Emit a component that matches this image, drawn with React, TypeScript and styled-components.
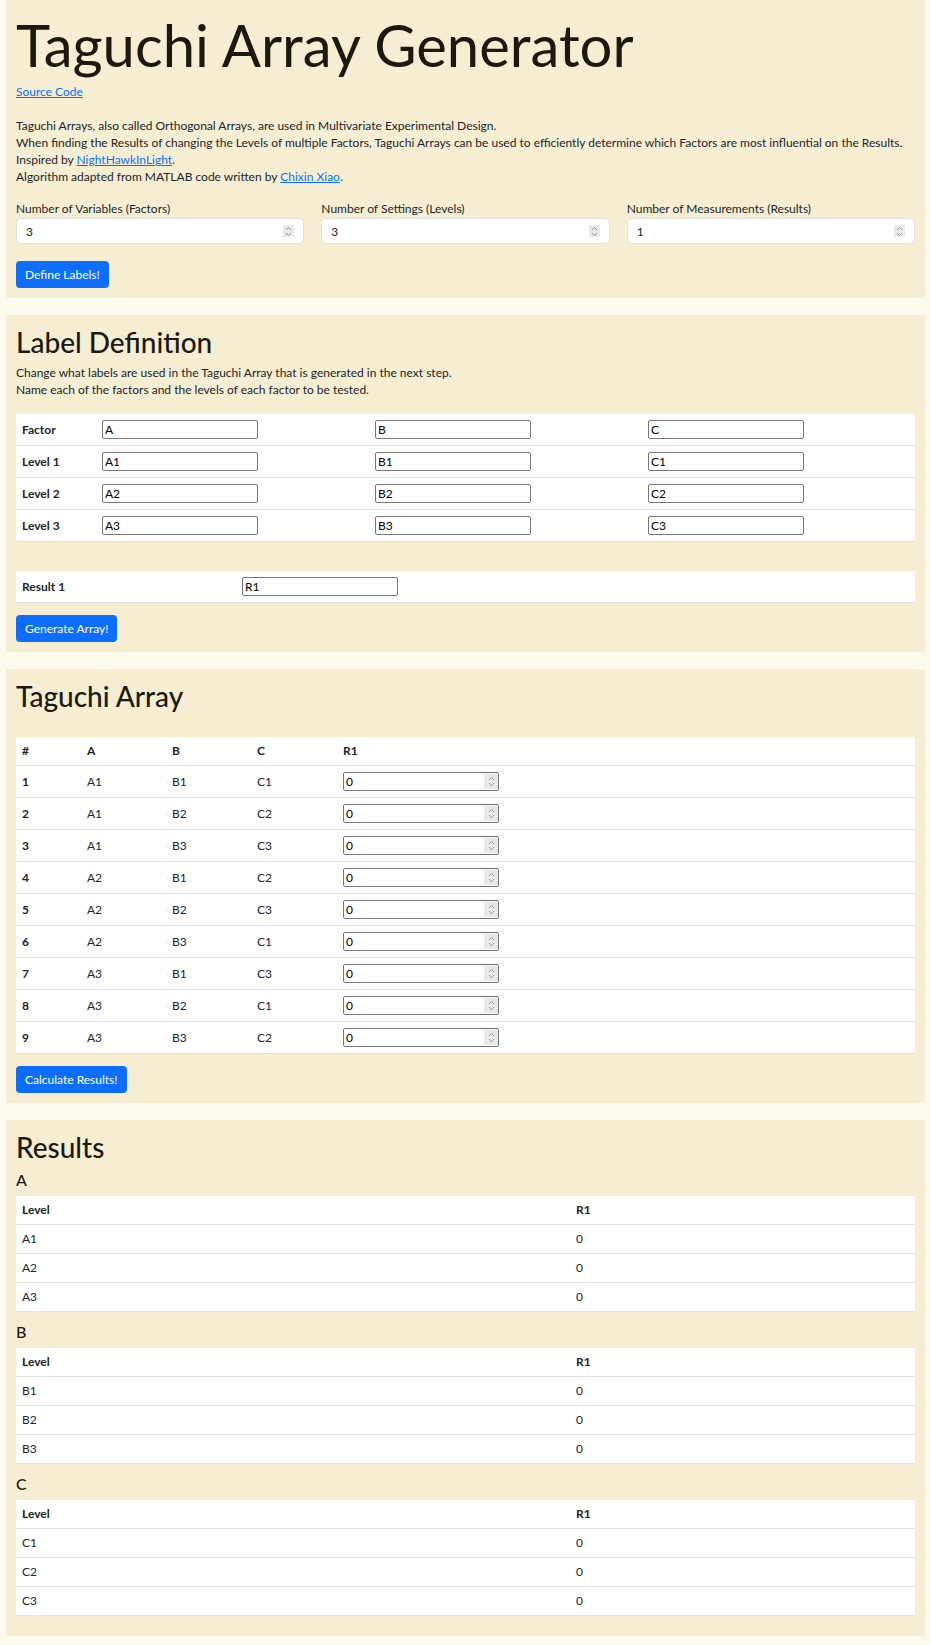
import React from 'react';
import styled, { createGlobalStyle } from 'styled-components';

const GlobalStyle = createGlobalStyle`
  html, body {
    margin: 0;
    padding: 0;
  }
  body {
    background: #fcf9ee;
    color: #212529;
    font-family: Lato, 'Open Sans', sans-serif;
    font-size: 12px;
    line-height: 17px;
  }
`;

const Page = styled.div`
  display: flex;
  flex-direction: column;
  gap: 17px;
  padding: 0 6px 6px;
`;

const Panel = styled.section`
  background: #f5eed3;
  padding: 10px;
`;

const Title = styled.h1`
  margin: 0 0 3px;
  font-size: 58px;
  line-height: 70px;
  font-weight: 400;
  color: #1c1a10;
`;

const Link = styled.a`
  color: #0d6efd;
  text-decoration: underline;
`;

const Intro = styled.div`
  margin: 17px 0 15px;
`;

const Line = styled.div``;

const FieldGrid = styled.div`
  display: grid;
  grid-template-columns: repeat(3, 1fr);
  gap: 17px;
  margin-bottom: 17px;
`;

const Field = styled.label`
  display: flex;
  flex-direction: column;
  gap: 1px;
`;

// wrapper so the spinner drawing can sit over the right edge of a number input
const SpinWrap = styled.span<{ $inline?: boolean }>`
  position: relative;
  display: block;
  width: ${p => (p.$inline ? '156px' : '100%')};
`;

const Spinner = styled.span<{ $compact?: boolean }>`
  position: absolute;
  display: flex;
  align-items: center;
  justify-content: center;
  background: #e9e9ed;
  pointer-events: none;
  ${p =>
    p.$compact
      ? `right: 10px; top: 7px; width: 11px; height: 12px;`
      : `right: 1px; top: 2px; width: 14px; height: 15px;`}
`;

const NumberBox = styled.input`
  box-sizing: border-box;
  height: 26px;
  width: 100%;
  padding: 3px 9px;
  border: 1px solid #dee2e6;
  border-radius: 5px;
  background: #fff;
  font: inherit;
  color: #212529;
  -moz-appearance: textfield;
  &::-webkit-inner-spin-button,
  &::-webkit-outer-spin-button {
    -webkit-appearance: none;
    margin: 0;
  }
`;

const PrimaryButton = styled.button`
  display: inline-block;
  border: none;
  border-radius: 4px;
  padding: 5px 9px;
  background: #0d6efd;
  color: #fff;
  font: inherit;
  line-height: 17px;
  cursor: pointer;
`;

const PanelHeading = styled.h3<{ $gap?: number }>`
  margin: 0 0 ${p => p.$gap ?? 5}px;
  font-size: 28px;
  line-height: 34px;
  font-weight: 500;
  color: #1c1a10;
`;

const SubHeading = styled.h5`
  margin: 0 0 7px;
  font-size: 16px;
  line-height: 19px;
  font-weight: 500;
  color: #1c1a10;
`;

const DataTable = styled.table<{ $gap?: number; $top?: number }>`
  width: 100%;
  border-collapse: collapse;
  table-layout: fixed;
  background: #fff;
  margin-top: ${p => p.$top ?? 0}px;
  margin-bottom: ${p => p.$gap ?? 12}px;
`;

const Col = styled.col<{ $w?: string }>`
  width: ${p => p.$w ?? 'auto'};
`;

const Row = styled.tr`
  border-bottom: 1px solid #dee2e6;
`;

const Th = styled.th`
  padding: 6px;
  text-align: left;
  vertical-align: middle;
  font-weight: 700;
  line-height: 16px;
`;

const Td = styled.td`
  padding: 6px;
  text-align: left;
  vertical-align: middle;
  line-height: 16px;
`;

const PlainInput = styled.input`
  box-sizing: border-box;
  display: block;
  width: 156px;
  height: 19px;
  padding: 0 2px;
  border: 1px solid #767676;
  border-radius: 2px;
  background: #fff;
  font: inherit;
  color: #000;
  -moz-appearance: textfield;
  &::-webkit-inner-spin-button,
  &::-webkit-outer-spin-button {
    -webkit-appearance: none;
    margin: 0;
  }
`;

const Chevrons: React.FC = () => (
  <svg width="7" height="11" viewBox="0 0 7 11" fill="none" stroke="#8d8d93" strokeWidth="0.9">
    <path d="M1 4 L3.5 1.3 L6 4" />
    <path d="M1 7 L3.5 9.7 L6 7" />
  </svg>
);

const factors = ['A', 'B', 'C'];
const levels = [1, 2, 3];

const runs = [
  ['A1', 'B1', 'C1'],
  ['A1', 'B2', 'C2'],
  ['A1', 'B3', 'C3'],
  ['A2', 'B1', 'C2'],
  ['A2', 'B2', 'C3'],
  ['A2', 'B3', 'C1'],
  ['A3', 'B1', 'C3'],
  ['A3', 'B2', 'C1'],
  ['A3', 'B3', 'C2'],
];

const CountField: React.FC<{ label: string; value: number }> = ({ label, value }) => (
  <Field>
    {label}
    <SpinWrap>
      <NumberBox type="number" defaultValue={value} />
      <Spinner $compact>
        <Chevrons />
      </Spinner>
    </SpinWrap>
  </Field>
);

const ResultTable: React.FC<{ factor: string }> = ({ factor }) => (
  <>
    <SubHeading>{factor}</SubHeading>
    <DataTable $gap={10}>
      <colgroup>
        <Col $w="554px" />
        <Col />
      </colgroup>
      <tbody>
        <Row>
          <Th>Level</Th>
          <Th>R1</Th>
        </Row>
        {levels.map(l => (
          <Row key={l}>
            <Td>{factor + l}</Td>
            <Td>0</Td>
          </Row>
        ))}
      </tbody>
    </DataTable>
  </>
);

export default function App() {
  return (
    <>
      <GlobalStyle />
      <Page>
        <Panel>
          <Title>Taguchi Array Generator</Title>
          <Link href="#">Source Code</Link>
          <Intro>
            <Line>Taguchi Arrays, also called Orthogonal Arrays, are used in Multivariate Experimental Design.</Line>
            <Line>
              When finding the Results of changing the Levels of multiple Factors, Taguchi Arrays can be used to
              efficiently determine which Factors are most influential on the Results.
            </Line>
            <Line>
              Inspired by <Link href="#">NightHawkInLight</Link>.
            </Line>
            <Line>
              Algorithm adapted from MATLAB code written by <Link href="#">Chixin Xiao</Link>.
            </Line>
          </Intro>
          <FieldGrid>
            <CountField label="Number of Variables (Factors)" value={3} />
            <CountField label="Number of Settings (Levels)" value={3} />
            <CountField label="Number of Measurements (Results)" value={1} />
          </FieldGrid>
          <PrimaryButton>Define Labels!</PrimaryButton>
        </Panel>

        <Panel>
          <PanelHeading>Label Definition</PanelHeading>
          <Line>Change what labels are used in the Taguchi Array that is generated in the next step.</Line>
          <Line>Name each of the factors and the levels of each factor to be tested.</Line>
          <DataTable $top={16} $gap={29}>
            <colgroup>
              <Col $w="80px" />
              <Col />
              <Col />
              <Col />
            </colgroup>
            <tbody>
              <Row>
                <Th>Factor</Th>
                {factors.map(f => (
                  <Td key={f}>
                    <PlainInput defaultValue={f} />
                  </Td>
                ))}
              </Row>
              {levels.map(l => (
                <Row key={l}>
                  <Th>Level {l}</Th>
                  {factors.map(f => (
                    <Td key={f}>
                      <PlainInput defaultValue={f + l} />
                    </Td>
                  ))}
                </Row>
              ))}
            </tbody>
          </DataTable>
          <DataTable>
            <colgroup>
              <Col $w="220px" />
              <Col />
            </colgroup>
            <tbody>
              <Row>
                <Th>Result 1</Th>
                <Td>
                  <PlainInput defaultValue="R1" />
                </Td>
              </Row>
            </tbody>
          </DataTable>
          <PrimaryButton>Generate Array!</PrimaryButton>
        </Panel>

        <Panel>
          <PanelHeading $gap={24}>Taguchi Array</PanelHeading>
          <DataTable>
            <colgroup>
              <Col $w="65px" />
              <Col $w="85px" />
              <Col $w="85px" />
              <Col $w="86px" />
              <Col />
            </colgroup>
            <tbody>
              <Row>
                <Th>#</Th>
                {factors.map(f => (
                  <Th key={f}>{f}</Th>
                ))}
                <Th>R1</Th>
              </Row>
              {runs.map((run, i) => (
                <Row key={i}>
                  <Th>{i + 1}</Th>
                  {run.map(v => (
                    <Td key={v}>{v}</Td>
                  ))}
                  <Td>
                    <SpinWrap $inline>
                      <PlainInput type="number" defaultValue={0} />
                      <Spinner>
                        <Chevrons />
                      </Spinner>
                    </SpinWrap>
                  </Td>
                </Row>
              ))}
            </tbody>
          </DataTable>
          <PrimaryButton>Calculate Results!</PrimaryButton>
        </Panel>

        <Panel>
          <PanelHeading $gap={6}>Results</PanelHeading>
          {factors.map(f => (
            <ResultTable key={f} factor={f} />
          ))}
        </Panel>
      </Page>
    </>
  );
}
